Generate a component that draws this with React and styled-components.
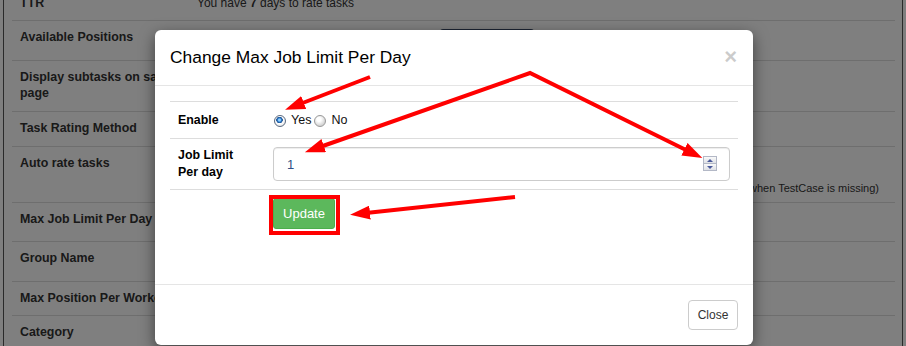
import React from 'react'
import styled, { createGlobalStyle } from 'styled-components'

const GlobalStyle = createGlobalStyle`
  body {
    margin: 0;
    background: #fff;
    font-family: "Liberation Sans", Arial, sans-serif;
    overflow: hidden;
  }
`

const Screen = styled.div`
  position: relative;
  width: 906px;
  height: 346px;
  overflow: hidden;
`

// settings page that sits behind the modal
const Sheet = styled.div`
  margin: -13px 0 0 3px;
  width: 900px;
  box-sizing: border-box;
  height: 380px;
  padding: 0 7px 0 8px;
  border-left: 1px solid #555;
  border-right: 1px solid #555;
`

const SettingRow = styled.div`
  display: grid;
  grid-template-columns: 185px 1fr;
  height: ${p => p.h}px;
  box-sizing: border-box;
  border-top: ${p => (p.first ? 'none' : '1px solid #ddd')};
`

const SettingLabel = styled.div`
  padding: 8px 8px 0;
  font-size: 12.4px;
  line-height: 16px;
  font-weight: bold;
  color: #333;
`

const SettingValue = styled.div`
  padding: 8px 0 0;
  font-size: 12px;
  line-height: 16px;
  color: #333;
  display: flex;
  flex-direction: column;
`

const Hint = styled.div`
  margin-top: 10px;
  padding-right: 16px;
  text-align: right;
  font-size: 11px;
  line-height: 14px;
`

const DarkButton = styled.div`
  margin-left: 243px;
  width: 94px;
  height: 24px;
  border-radius: 3px;
  background: #3a4b66;
`

const Backdrop = styled.div`
  position: absolute;
  inset: 0;
  background: rgba(0, 0, 0, 0.5);
`

const Modal = styled.div`
  position: absolute;
  left: 155px;
  top: 30px;
  width: 598px;
  background: #fff;
  border-radius: 6px;
  box-shadow: 0 5px 15px rgba(0, 0, 0, 0.5);
`

const ModalHeader = styled.div`
  display: flex;
  align-items: center;
  justify-content: space-between;
  padding: 15px;
  border-bottom: 1px solid #e5e5e5;
`

const Title = styled.h4`
  margin: 0;
  font-size: 17.4px;
  line-height: 25px;
  font-weight: normal;
  color: #000;
`

const CloseX = styled.span`
  font-size: 22px;
  font-weight: bold;
  line-height: 1;
  color: #000;
  opacity: 0.2;
  margin: -2px 1px 0 0;
`

const ModalBody = styled.div`
  height: 198px;
  box-sizing: border-box;
  padding: 15px;
`

const FormTable = styled.table`
  width: 100%;
  border-collapse: collapse;
`

const Cell = styled.td`
  padding: 8px;
  border-top: ${p => (p.top ? '1px solid #ddd' : 'none')};
  vertical-align: middle;
  font-size: 12.4px;
  line-height: 17px;
  color: #000;
`

const FieldLabel = styled(Cell)`
  width: 79px;
  font-weight: bold;
`

const RadioGroup = styled.div`
  display: flex;
  align-items: center;
  padding-left: 1px;
  line-height: 20px;
`

const Radio = styled.input.attrs({ type: 'radio' })`
  appearance: none;
  margin: 1px 5px 0 0;
  width: 12px;
  height: 12px;
  border-radius: 50%;
  border: 1px solid ${p => (p.checked ? '#5a6a80' : '#9a9a9a')};
  box-sizing: border-box;
  background: ${p =>
    p.checked
      ? 'radial-gradient(circle at 45% 40%, #8fd0ff 0 1px, #2d79c7 2px, #1b4f8f 3px, #fff 3.5px, #e8e8e8 6px)'
      : 'radial-gradient(circle at 40% 35%, #fff 0 2px, #d6d6d6 6px)'};
`

const RadioText = styled.span`
  font-size: 12.5px;
  margin-right: 3px;
  color: #111;
`

const NumberBox = styled.div`
  position: relative;
  height: 34px;
  box-sizing: border-box;
  border: 1px solid #ccc;
  border-radius: 4px;
  box-shadow: inset 0 1px 1px rgba(0, 0, 0, 0.075);
  display: flex;
  align-items: center;
  padding-left: 13px;
  font-size: 13px;
  color: #2f4f86;
`

const Spinner = styled.div`
  position: absolute;
  right: 12px;
  top: 8px;
  width: 14px;
  display: flex;
  flex-direction: column;
`

const SpinHalf = styled.span`
  height: 8px;
  box-sizing: border-box;
  border: 1px solid #b3b8c6;
  margin-top: ${p => (p.down ? '-1px' : '0')};
  background: linear-gradient(#fafafa, #dfe1e6);
  display: flex;
  align-items: center;
  justify-content: center;
  &::after {
    content: '';
    border-left: 3px solid transparent;
    border-right: 3px solid transparent;
    ${p => (p.down ? 'border-top: 3px solid #4b5a9a;' : 'border-bottom: 3px solid #4b5a9a;')}
  }
`

const GreenButton = styled.button`
  width: 62px;
  height: 31px;
  border: 1px solid #4cae4c;
  border-radius: 3px;
  background: #5cb85c;
  color: #fff;
  font-family: inherit;
  font-size: 13px;
  padding: 0;
`

const ModalFooter = styled.div`
  display: flex;
  justify-content: flex-end;
  padding: 15px;
  border-top: 1px solid #e5e5e5;
`

const PlainButton = styled.button`
  width: 50px;
  height: 30px;
  border: 1px solid #ccc;
  border-radius: 4px;
  background: #fff;
  color: #333;
  font-family: inherit;
  font-size: 12px;
  padding: 0;
`

const Annotations = styled.svg`
  position: absolute;
  left: 0;
  top: 0;
  pointer-events: none;
`

const rows = [
  { label: 'TTR', h: 33, first: true, value: <span>You have <b>7</b> days to rate tasks</span> },
  { label: 'Available Positions', h: 40, value: <DarkButton /> },
  { label: <>Display subtasks on sample<br />page</>, h: 51 },
  { label: 'Task Rating Method', h: 35 },
  {
    label: 'Auto rate tasks',
    h: 56,
    value: <><span>&nbsp;</span><Hint>(Use default rating when TestCase is missing)</Hint></>,
  },
  { label: 'Max Job Limit Per Day', h: 39 },
  { label: 'Group Name', h: 40 },
  { label: 'Max Position Per Worker', h: 34 },
  { label: 'Category', h: 40 },
]

const App = () => {
  return (
    <Screen>
      <GlobalStyle />
      <Sheet>
        {rows.map((r, i) => (
          <SettingRow key={i} h={r.h} first={r.first}>
            <SettingLabel>{r.label}</SettingLabel>
            <SettingValue>{r.value}</SettingValue>
          </SettingRow>
        ))}
      </Sheet>
      <Backdrop />
      <Modal>
        <ModalHeader>
          <Title>Change Max Job Limit Per Day</Title>
          <CloseX>×</CloseX>
        </ModalHeader>
        <ModalBody>
          <FormTable>
            <tbody>
              <tr>
                <FieldLabel top>Enable</FieldLabel>
                <Cell top>
                  <RadioGroup>
                    <Radio name="enable" checked readOnly />
                    <RadioText>Yes</RadioText>
                    <Radio name="enable" checked={false} readOnly />
                    <RadioText>No</RadioText>
                  </RadioGroup>
                </Cell>
              </tr>
              <tr>
                <FieldLabel top>Job Limit<br />Per day</FieldLabel>
                <Cell top>
                  <NumberBox>
                    1
                    <Spinner>
                      <SpinHalf />
                      <SpinHalf down />
                    </Spinner>
                  </NumberBox>
                </Cell>
              </tr>
              <tr>
                <Cell top />
                <Cell top>
                  <GreenButton>Update</GreenButton>
                </Cell>
              </tr>
            </tbody>
          </FormTable>
        </ModalBody>
        <ModalFooter>
          <PlainButton>Close</PlainButton>
        </ModalFooter>
      </Modal>
      <Annotations width="906" height="346">
        <defs>
          <marker id="head" markerUnits="userSpaceOnUse" markerWidth="20" markerHeight="14"
            refX="4" refY="7" orient="auto-start-reverse">
            <path d="M0,0 L20,7 L0,14 Z" fill="#f00" />
          </marker>
        </defs>
        <g stroke="#f00" strokeWidth="4" fill="none" strokeLinejoin="miter">
          <line x1="370" y1="77" x2="300" y2="104" markerEnd="url(#head)" />
          <polyline points="320,147 530,73 688,151" markerStart="url(#head)" markerEnd="url(#head)" />
          <line x1="515" y1="197" x2="366" y2="213" markerEnd="url(#head)" />
          <rect x="271" y="197" width="67" height="36" />
        </g>
      </Annotations>
    </Screen>
  )
}

export default App
